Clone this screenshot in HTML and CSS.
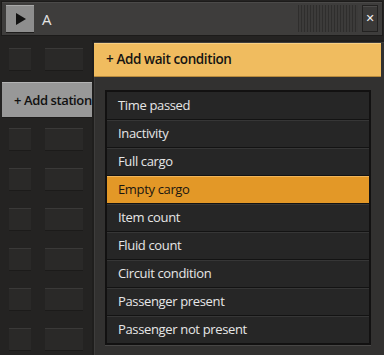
FILE: index.html
```html
<!DOCTYPE html>
<html lang="en">
<head>
  <meta charset="UTF-8" />
  <title>Train schedule</title>
  <link rel="stylesheet" href="styles.css">
</head>
<body>
  <div class="window">
    <div class="titlebar">
      <button class="play-btn"><span class="triangle"></span></button>
      <span class="title">A</span>
      <div class="drag-handle"></div>
      <button class="close-btn">&#x2715;</button>
    </div>

    <div class="content">
      <div class="stations">
        <div class="slot-row"><span class="slot small"></span><span class="slot wide"></span></div>
        <button class="add-station">+ Add station</button>
        <div class="slot-row"><span class="slot small"></span><span class="slot wide"></span></div>
        <div class="slot-row"><span class="slot small"></span><span class="slot wide"></span></div>
        <div class="slot-row"><span class="slot small"></span><span class="slot wide"></span></div>
        <div class="slot-row"><span class="slot small"></span><span class="slot wide"></span></div>
        <div class="slot-row"><span class="slot small"></span><span class="slot wide"></span></div>
        <div class="slot-row"><span class="slot small"></span><span class="slot wide"></span></div>
      </div>

      <div class="popup">
        <div class="popup-header">+ Add wait condition</div>
        <ul class="condition-list">
          <li>Time passed</li>
          <li>Inactivity</li>
          <li>Full cargo</li>
          <li class="selected">Empty cargo</li>
          <li>Item count</li>
          <li>Fluid count</li>
          <li>Circuit condition</li>
          <li>Passenger present</li>
          <li>Passenger not present</li>
        </ul>
      </div>
    </div>
  </div>
</body>
</html>
```

FILE: styles.css
```css
body {
  margin: 0;
  padding: 0;
  background-color: #242322;
  font-family: 'Open Sans', sans-serif;
  width: 384px;
  height: 355px;
  overflow: hidden;
}

.window {
  width: 384px;
  height: 355px;
  display: flex;
  flex-direction: column;
}

.titlebar {
  height: 35px;
  margin: 1px 1px 0;
  box-sizing: border-box;
  background-color: #3e3d3c;
  border: 1px solid #1c1b1a;
  box-shadow: inset 0 1px 0 #4b4a49;
  display: flex;
  align-items: center;
  padding: 0 4px;
}

.play-btn {
  width: 28px;
  height: 27px;
  padding: 0;
  border: none;
  background-color: #8e8e8e;
  box-shadow: inset 0 1px 0 #a9a9a9, 0 1px 0 #1e1d1c;
  display: flex;
  align-items: center;
  justify-content: center;
}

.triangle {
  width: 0;
  height: 0;
  border-top: 6px solid transparent;
  border-bottom: 6px solid transparent;
  border-left: 10px solid #111;
  margin-left: 2px;
}

.title {
  color: #e4e4e4;
  font-size: 15px;
  margin-left: 8px;
  flex: 1;
}

.drag-handle {
  width: 60px;
  height: 27px;
  background: repeating-linear-gradient(90deg, #2f2e2d 0, #2f2e2d 1px, #3c3b3a 1px, #3c3b3a 3px);
  margin-right: 4px;
}

.close-btn {
  width: 16px;
  height: 27px;
  padding: 0;
  border: 1px solid #232221;
  background-color: #3a3938;
  box-shadow: inset 0 1px 0 #4c4b4a;
  color: #f0f0f0;
  font-size: 11px;
  font-weight: bold;
  font-family: 'DejaVu Sans', sans-serif;
}

.content {
  flex: 1;
  display: flex;
  min-height: 0;
}

.stations {
  width: 92px;
  flex-shrink: 0;
  padding-top: 12px;
  display: flex;
  flex-direction: column;
  gap: 18px;
}

.slot-row {
  display: flex;
  gap: 14px;
  padding-left: 9px;
}

.slot {
  height: 22px;
  background-color: #2a2928;
  box-shadow: inset 0 1px 0 #3a3938, 0 1px 0 #1c1b1a;
}

.slot.small {
  width: 22px;
}

.slot.wide {
  width: 38px;
}

.add-station {
  margin: -6px 0 -7px 2px;
  width: 92px;
  height: 35px;
  border: none;
  background-color: #989898;
  box-shadow: inset 0 1px 0 #b4b4b4, 0 1px 0 #1c1b1a;
  color: #111;
  font-family: 'Open Sans', sans-serif;
  font-size: 13px;
  font-weight: 600;
  letter-spacing: -0.4px;
  text-align: left;
  padding: 0 0 0 12px;
  white-space: nowrap;
}

.popup {
  flex: 1;
  margin-top: 4px;
  background-color: #323130;
  border: 2px solid #1f1e1d;
  border-right: none;
  border-bottom: none;
  padding: 1px 1px 0 0;
  box-shadow: inset 1px 1px 0 #3e3d3c;
  position: relative;
  z-index: 1;
}

.popup-header {
  height: 33px;
  background-color: #f0bc5f;
  border-bottom: 1px solid #b88a3c;
  box-shadow: inset 0 1px 0 #f7cf83;
  color: #161513;
  font-size: 13.5px;
  font-weight: 600;
  letter-spacing: -0.4px;
  line-height: 33px;
  padding-left: 12px;
  margin-right: 2px;
}

.condition-list {
  list-style: none;
  margin: 13px 12px 0 11px;
  padding: 0;
  border: 2px solid #121111;
  box-shadow: 0 1px 0 #474645;
}

.condition-list li {
  height: 27px;
  line-height: 26px;
  background-color: #262626;
  border-bottom: 1px solid #131313;
  box-shadow: inset 0 1px 0 #363636;
  color: #e6e6e6;
  font-size: 13px;
  letter-spacing: -0.35px;
  padding-left: 11px;
}

.condition-list li:first-child {
  box-shadow: none;
}

.condition-list li:last-child {
  border-bottom: none;
}

.condition-list li.selected {
  background-color: #e39827;
  box-shadow: inset 0 1px 0 #f0b55a;
  color: #1a1611;
}
```
